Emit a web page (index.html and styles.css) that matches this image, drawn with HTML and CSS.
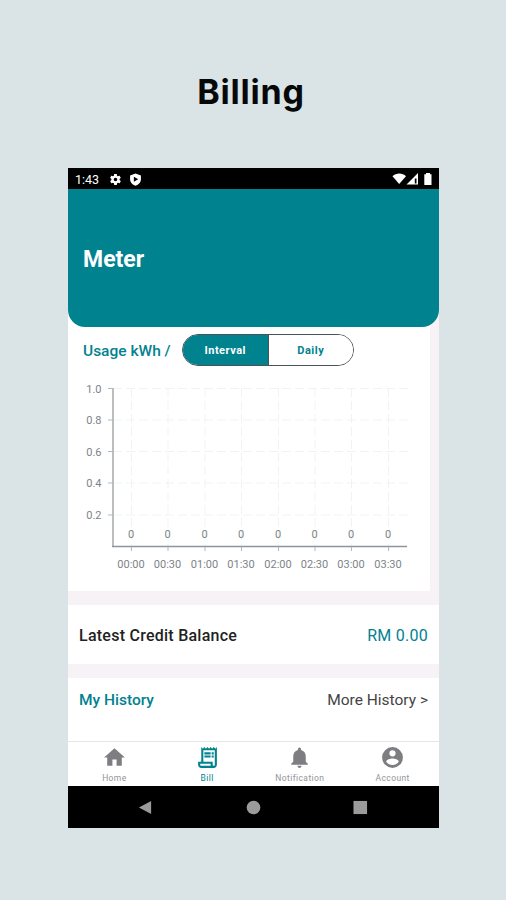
FILE: index.html
```html
<!DOCTYPE html>
<html lang="en">
<head>
    <meta charset="UTF-8">
    <meta name="viewport" content="width=device-width, initial-scale=1.0">
    <title>Billing</title>
    <link rel="stylesheet" href="styles.css">
</head>
<body>
    <h1 class="page-title">Billing</h1>

    <div class="phone">
        <div class="status-bar">
            <span class="time">1:43</span>
            <svg class="status-icon gear" viewBox="0 0 24 24"><path fill-rule="evenodd" d="M19.4 13c0-.3.1-.6.1-1s0-.7-.1-1l2.1-1.600c.2-.2.2-.4.100-.6l-2-3.500c-.1-.2-.4-.3-.6-.2l-2.500 1c-.5-.4-1.100-.7-1.700-1l-.4-2.600c0-.3-.2-.5-.5-.5h-4c-.2 0-.4.200-.5.400l-.4 2.700c-.6.200-1.100.6-1.700 1l-2.500-1c-.2-.1-.4 0-.6.200l-2 3.500c-.1.200 0 .4.200.6L4.500 11c0 .3-.1.700-.1 1s0 .7.100 1l-2.100 1.600c-.2.200-.2.400-.1.600l2 3.500c.1.200.4.300.6.200l2.500-1c.5.400 1.100.7 1.700 1l.4 2.700c0 .2.200.4.500.4h4c.2 0 .5-.2.500-.4l.4-2.700c.6-.2 1.200-.6 1.700-1l2.500 1c.2.100.5 0 .6-.2l2-3.500c.1-.2.1-.5-.1-.6zM12 15.300a3.300 3.300 0 1 1 0-6.600 3.300 3.300 0 0 1 0 6.600z"/></svg>
            <svg class="status-icon" viewBox="0 0 24 24"><path fill-rule="evenodd" d="M12 1L2 4.500V12c0 5.500 4 9.500 10 11.500 6-2 10-6 10-11.500V4.500zM9 7l8 4.500L9 16z"/></svg>
            <svg class="signal" viewBox="0 0 42 14">
                <path d="M0.500 4.200C4 .6 10.500.6 14 4.200L7.200 12z"/>
                <path fill-rule="evenodd" d="M26 1v11.500H14.500zM22.800 6.500v5h1.700v-5z"/>
                <path d="M34 1h4v1.300h1.500V13h-7.200V2.300H34z"/>
            </svg>
        </div>

        <div class="header">
            <h2>Meter</h2>
        </div>

        <div class="content">
            <div class="chart-card">
                <div class="chart-head">
                    <span class="usage">Usage kWh /</span>
                    <div class="toggle">
                        <button class="active" type="button">Interval</button>
                        <button type="button">Daily</button>
                    </div>
                </div>
                <svg class="chart" width="362" height="210" viewBox="0 0 362 210">
                    <g class="grid">
                        <path d="M45 12.500H340M45 44H340M45 75.500H340M45 107H340M45 139H340"/>
                        <path d="M63.500 12V170M100 12V170M137 12V170M173.500 12V170M210.500 12V170M247 12V170M283.500 12V170M320.500 12V170"/>
                    </g>
                    <path class="axis-y" d="M45 12V170"/>
                    <path class="axis-x" d="M44 170.500H339"/>
                    <path class="ticks" d="M40 12.500H45M40 44H45M40 75.500H45M40 107H45M40 139H45M63.500 171v4M100 171v4M137 171v4M173.500 171v4M210.500 171v4M247 171v4M283.500 171v4M320.500 171v4"/>
                    <g class="labels-y">
                        <text x="33.500" y="16.500">1.0</text>
                        <text x="33.500" y="48">0.8</text>
                        <text x="33.500" y="79.500">0.6</text>
                        <text x="33.500" y="111">0.4</text>
                        <text x="33.500" y="143">0.2</text>
                    </g>
                    <g class="labels-x">
                        <text x="63" y="162">0</text>
                        <text x="99.500" y="162">0</text>
                        <text x="136.500" y="162">0</text>
                        <text x="173" y="162">0</text>
                        <text x="210" y="162">0</text>
                        <text x="246.500" y="162">0</text>
                        <text x="283" y="162">0</text>
                        <text x="320" y="162">0</text>
                        <text x="63" y="192">00:00</text>
                        <text x="99.500" y="192">00:30</text>
                        <text x="136.500" y="192">01:00</text>
                        <text x="173" y="192">01:30</text>
                        <text x="210" y="192">02:00</text>
                        <text x="246.500" y="192">02:30</text>
                        <text x="283" y="192">03:00</text>
                        <text x="320" y="192">03:30</text>
                    </g>
                </svg>
            </div>

            <div class="row balance">
                <span>Latest Credit Balance</span>
                <span class="amount">RM 0.00</span>
            </div>

            <div class="row history">
                <span class="history-title">My History</span>
                <span class="more">More History &gt;</span>
            </div>
        </div>

        <div class="tabs">
            <div class="tab">
                <svg viewBox="0 0 24 24"><path d="M10 20v-6h4v6h5v-8h3L12 3 2 12h3v8z"/></svg>
                <span>Home</span>
            </div>
            <div class="tab selected">
                <svg viewBox="0 0 24 24"><path fill-rule="evenodd" d="M19.500 3.500L18 2l-1.500 1.500L15 2l-1.500 1.500L12 2l-1.500 1.500L9 2 7.500 3.500 6 2v14H3v3c0 1.700 1.300 3 3 3h12c1.700 0 3-1.300 3-3V2zM15 20H6c-.6 0-1-.4-1-1v-1h10zm4-1c0 .6-.4 1-1 1s-1-.4-1-1v-3H8V5h11z"/><path d="M9 7h6v2H9zM16 7h2v2h-2zM9 10h6v2H9zM16 10h2v2h-2z"/></svg>
                <span>Bill</span>
            </div>
            <div class="tab">
                <svg viewBox="0 0 24 24"><path d="M12 22c1.100 0 2-.9 2-2h-4c0 1.100.9 2 2 2zm6-6v-5c0-3.100-1.600-5.600-4.500-6.300V4a1.500 1.500 0 0 0-3 0v.7C7.600 5.400 6 7.900 6 11v5l-2 2v1h16v-1z"/></svg>
                <span>Notification</span>
            </div>
            <div class="tab">
                <svg viewBox="0 0 24 24"><path fill-rule="evenodd" d="M12 2a10 10 0 1 0 0 20 10 10 0 0 0 0-20zm0 3a3 3 0 1 1 0 6 3 3 0 0 1 0-6zm0 14.200a7.200 7.200 0 0 1-6-3.200c0-2 4-3.100 6-3.100s6 1.100 6 3.100a7.200 7.200 0 0 1-6 3.200z"/></svg>
                <span>Account</span>
            </div>
        </div>

        <div class="android-nav">
            <svg viewBox="0 0 16 16"><path d="M1 8L14 1v14z"/></svg>
            <svg viewBox="0 0 16 16"><circle cx="8" cy="8" r="7.300"/></svg>
            <svg viewBox="0 0 16 16"><path d="M.5 1h14.500v14H.5z"/></svg>
        </div>
    </div>
</body>
</html>
```
FILE: styles.css
```css
* {
    box-sizing: border-box;
}
body {
    margin: 0;
    height: 900px;
    background-color: #dae3e6;
    font-family: Roboto, sans-serif;
    overflow: hidden;
}
.page-title {
    margin: 0;
    padding-top: 71px;
    height: 168px;
    padding-right: 4px;
    text-align: center;
    font-family: Inter, sans-serif;
    font-size: 34px;
    line-height: 42px;
    font-weight: 700;
    letter-spacing: 0.8px;
    color: #050808;
}
.phone {
    width: 371px;
    height: 660px;
    margin-left: 68px;
    display: flex;
    flex-direction: column;
    background-color: #f6f2f6;
}
.status-bar {
    height: 21px;
    padding: 1px 5px 0 7px;
    display: flex;
    align-items: center;
    background-color: #000;
    color: #fff;
}
.status-bar svg {
    fill: #fff;
}
.time {
    width: 34px;
    font-size: 12.5px;
}
.status-icon {
    width: 13px;
    height: 13px;
    margin-right: 7px;
}
.signal {
    width: 42px;
    height: 14px;
    margin-left: auto;
}
.header {
    height: 138px;
    padding: 3px 15px 0;
    display: flex;
    align-items: center;
    background-color: #01828f;
    border-radius: 0 0 17px 17px;
    z-index: 1;
}
.header h2 {
    margin: 0;
    color: #fff;
    font-size: 23px;
    font-weight: 700;
}
.content {
    flex: 1;
    display: flex;
    flex-direction: column;
}
.chart-card {
    width: 362px;
    height: 281px;
    margin-top: -17px;
    padding-top: 24px;
    background-color: #fff;
}
.chart-head {
    height: 32px;
    padding-left: 15px;
    display: flex;
    align-items: center;
}
.usage {
    width: 99px;
    padding-top: 1px;
    color: #01828f;
    font-size: 15.5px;
    font-weight: 500;
}
.toggle {
    width: 172px;
    height: 32px;
    display: flex;
    border: 1px solid #4b5356;
    border-radius: 16px;
    overflow: hidden;
}
.toggle button {
    flex: 1;
    padding: 1px 0 0;
    border: none;
    background-color: #fff;
    color: #01828f;
    font-family: Roboto, sans-serif;
    font-size: 11px;
    font-weight: 700;
    letter-spacing: 0.5px;
}
.toggle .active {
    background-color: #01828f;
    color: #fff;
    border-right: 1px solid #4b5356;
}
.chart {
    display: block;
    margin-top: 10px;
    font-family: Roboto, sans-serif;
    font-size: 11px;
    fill: #7d8488;
}
.chart path {
    fill: none;
}
.grid {
    stroke: #f1f3f3;
    stroke-dasharray: 9 4;
}
.axis-y {
    stroke: #babec1;
    stroke-width: 2;
}
.axis-x {
    stroke: #8c9699;
    stroke-width: 1.5;
}
.ticks {
    stroke: #b3b8bb;
}
.labels-y {
    text-anchor: end;
}
.labels-x {
    text-anchor: middle;
}
.row {
    display: flex;
    justify-content: space-between;
    align-items: center;
    padding: 0 11px;
    background-color: #fff;
    font-size: 16px;
}
.balance {
    height: 59px;
    margin-top: 14px;
    padding-top: 2px;
    color: #222;
    font-weight: 500;
    letter-spacing: 0.25px;
}
.amount {
    color: #01828f;
    font-weight: 400;
}
.history {
    flex: 1;
    margin-top: 14px;
    padding-bottom: 19px;
    font-size: 15.5px;
}
.history-title {
    color: #01828f;
    font-weight: 500;
}
.more {
    color: #444;
}
.tabs {
    height: 45px;
    display: flex;
    background-color: #fff;
    border-top: 1px solid #e6e6e8;
}
.tab {
    flex: 1;
    padding-top: 3px;
    display: flex;
    flex-direction: column;
    align-items: center;
    color: #939397;
    font-size: 8.5px;
    line-height: 10px;
    letter-spacing: 0.4px;
}
.tab svg {
    width: 25px;
    height: 25px;
    margin-bottom: 3px;
    fill: #7e7e82;
}
.selected {
    color: #01828f;
}
.selected svg {
    fill: #01828f;
}
.android-nav {
    height: 42px;
    padding: 0 71px 0 70px;
    display: flex;
    justify-content: space-between;
    align-items: center;
    background-color: #000;
}
.android-nav svg {
    width: 15px;
    height: 15px;
    fill: #9b9b9b;
}
```
